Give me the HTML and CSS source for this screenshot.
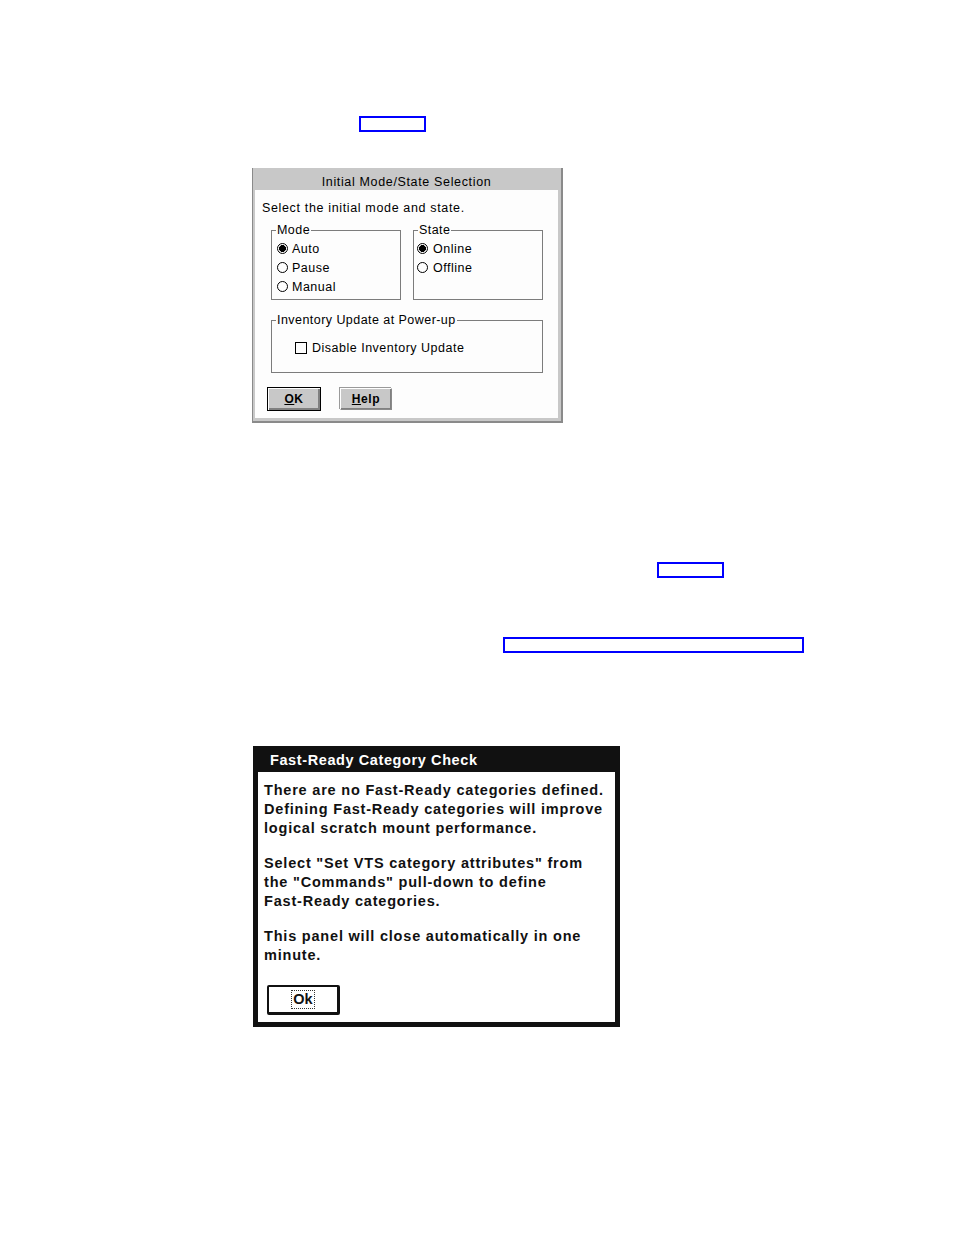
FILE: index.html
```html
<!DOCTYPE html>
<html>
<head>
<meta charset="utf-8">
<link rel="stylesheet" href="styles.css">
</head>
<body>
<div class="page">
  <div class="link link1"></div>

  <div class="dlg1">
    <div class="dlg1-title">Initial Mode/State Selection</div>
    <div class="dlg1-body">
      <div class="prompt">Select the initial mode and state.</div>
      <div class="groups">
        <fieldset class="grp grp-small">
          <legend>Mode</legend>
          <div class="opt"><span class="radio on"></span>Auto</div>
          <div class="opt"><span class="radio"></span>Pause</div>
          <div class="opt"><span class="radio"></span>Manual</div>
        </fieldset>
        <fieldset class="grp grp-small grp-state">
          <legend>State</legend>
          <div class="opt"><span class="radio on"></span>Online</div>
          <div class="opt"><span class="radio"></span>Offline</div>
        </fieldset>
      </div>
      <fieldset class="grp grp-wide">
        <legend>Inventory Update at Power-up</legend>
        <div class="opt chk-row"><span class="check"></span>Disable Inventory Update</div>
      </fieldset>
      <div class="buttons">
        <div class="btn btn-default"><u>O</u>K</div>
        <div class="btn btn-help"><u>H</u>elp</div>
      </div>
    </div>
  </div>

  <div class="link link2"></div>
  <div class="link link3"></div>

  <div class="dlg2">
    <div class="dlg2-title">Fast-Ready Category Check</div>
    <div class="dlg2-body">
      <p>There are no Fast-Ready categories defined.<br>Defining Fast-Ready categories will improve<br>logical scratch mount performance.</p>
      <p>Select "Set VTS category attributes" from<br>the "Commands" pull-down to define<br>Fast-Ready categories.</p>
      <p class="last">This panel will close automatically in one<br>minute.</p>
      <div class="ok-btn"><span class="ok-focus">Ok</span></div>
    </div>
  </div>
</div>
</body>
</html>
```

FILE: styles.css
```css
html, body {
  margin: 0;
  padding: 0;
  background: #ffffff;
}

.page {
  width: 954px;
  height: 1235px;
  padding-top: 116px;
  box-sizing: border-box;
  display: flex;
  flex-direction: column;
  align-items: flex-start;
}

.link {
  border: 2px solid #0000ff;
  box-sizing: border-box;
  height: 16px;
}

.link1 {
  margin-left: 359px;
  width: 67px;
}

.link2 {
  margin-top: 139px;
  margin-left: 657px;
  width: 67px;
}

.link3 {
  margin-top: 59px;
  margin-left: 503px;
  width: 301px;
}

/* ---------- Dialog 1 ---------- */
.dlg1 {
  margin-top: 36px;
  margin-left: 252px;
  width: 311px;
  height: 255px;
  box-sizing: border-box;
  background: #c8c8c8;
  border-left: 1px solid #8a8a8a;
  border-right: 2px solid #8a8a8a;
  border-bottom: 2px solid #8a8a8a;
  padding: 0 3px 3px 2px;
  display: flex;
  flex-direction: column;
  font-family: "Liberation Sans", Arial, sans-serif;
  font-size: 12.5px;
  color: #000;
}

.dlg1-title {
  height: 22px;
  line-height: 28px;
  text-align: center;
  letter-spacing: 0.65px;
  color: #000;
}

.dlg1-body {
  flex: 1;
  background: #fdfdfd;
  padding: 10px 15px 0 16px;
  display: flex;
  flex-direction: column;
}

.prompt {
  margin-left: -9px;
  line-height: 16px;
  letter-spacing: 0.65px;
}

.groups {
  display: flex;
  gap: 12px;
  margin-top: 7px;
}

.grp {
  margin: 0;
  padding: 0 0 0 5px;
  border: 1px solid #7c7c7c;
  min-width: 0;
  box-sizing: border-box;
}

.grp legend {
  padding: 0 1px;
  margin-left: -1px;
  line-height: 14px;
  letter-spacing: 0.45px;
}

.grp-small {
  width: 130px;
  height: 77px;
  padding-top: 2px;
}

.grp-state {
  padding-left: 3px;
}

.grp-state legend {
  margin-left: 1px;
}

.grp-state .radio {
  margin-right: 5px;
}

.grp-wide {
  width: 272px;
  height: 60px;
  margin-top: 13px;
  padding-top: 11px;
}

.chk-row {
  margin-left: 18px;
}

.opt {
  display: flex;
  align-items: center;
  height: 19px;
  letter-spacing: 0.5px;
}

.radio {
  width: 11px;
  height: 11px;
  box-sizing: border-box;
  border: 1px solid #000;
  border-radius: 50%;
  margin-right: 4px;
  background: #fff;
}

.radio.on {
  background: radial-gradient(circle, #000 0 3.2px, #fff 3.7px 100%);
}

.check {
  width: 12px;
  height: 12px;
  box-sizing: border-box;
  border: 1px solid #000;
  margin-right: 5px;
}

.buttons {
  display: flex;
  align-items: center;
  gap: 18px;
  margin-top: 14px;
  margin-left: -4px;
}

.btn {
  box-sizing: border-box;
  background: #c8c8c8;
  font-weight: bold;
  font-size: 12px;
  letter-spacing: 0.6px;
  display: flex;
  align-items: center;
  justify-content: center;
}

.btn-default {
  width: 54px;
  height: 24px;
  border: 1px solid #000;
  box-shadow: inset 1px 1px 0 #ffffff, inset -2px -2px 0 #808080;
}

.btn-help {
  width: 52px;
  height: 22px;
  margin-left: 1px;
  border: 1px solid #8a8a8a;
  border-top-color: #ffffff;
  border-left-color: #ffffff;
  box-shadow: inset -1px -1px 0 #808080, -1px -1px 0 #9a9a9a;
}

/* ---------- Dialog 2 ---------- */
.dlg2 {
  margin-top: 93px;
  margin-left: 253px;
  width: 367px;
  height: 281px;
  box-sizing: border-box;
  background: #111111;
  padding: 0 5px 5px 5px;
  display: flex;
  flex-direction: column;
  font-family: "Liberation Sans", Arial, sans-serif;
  font-weight: bold;
  color: #111;
}

.dlg2-title {
  height: 26px;
  line-height: 29px;
  color: #ffffff;
  padding-left: 12px;
  font-size: 14.5px;
  letter-spacing: 0.6px;
}

.dlg2-body {
  flex: 1;
  background: #ffffff;
  padding: 9px 6px 0 6px;
  font-size: 14.5px;
  line-height: 19px;
  letter-spacing: 0.8px;
}

.dlg2-body p {
  margin: 0 0 16px 0;
}

.dlg2-body p.last {
  margin-bottom: 20px;
}

.ok-btn {
  margin-left: 3px;
  width: 73px;
  height: 30px;
  box-sizing: border-box;
  border: 2px solid #111;
  border-right-width: 3px;
  border-bottom-width: 3px;
  border-radius: 2px;
  display: flex;
  align-items: center;
  justify-content: center;
}

.ok-focus {
  border: 1px dotted #333;
  padding: 0 1px;
  line-height: 17px;
  letter-spacing: 0;
}
```
